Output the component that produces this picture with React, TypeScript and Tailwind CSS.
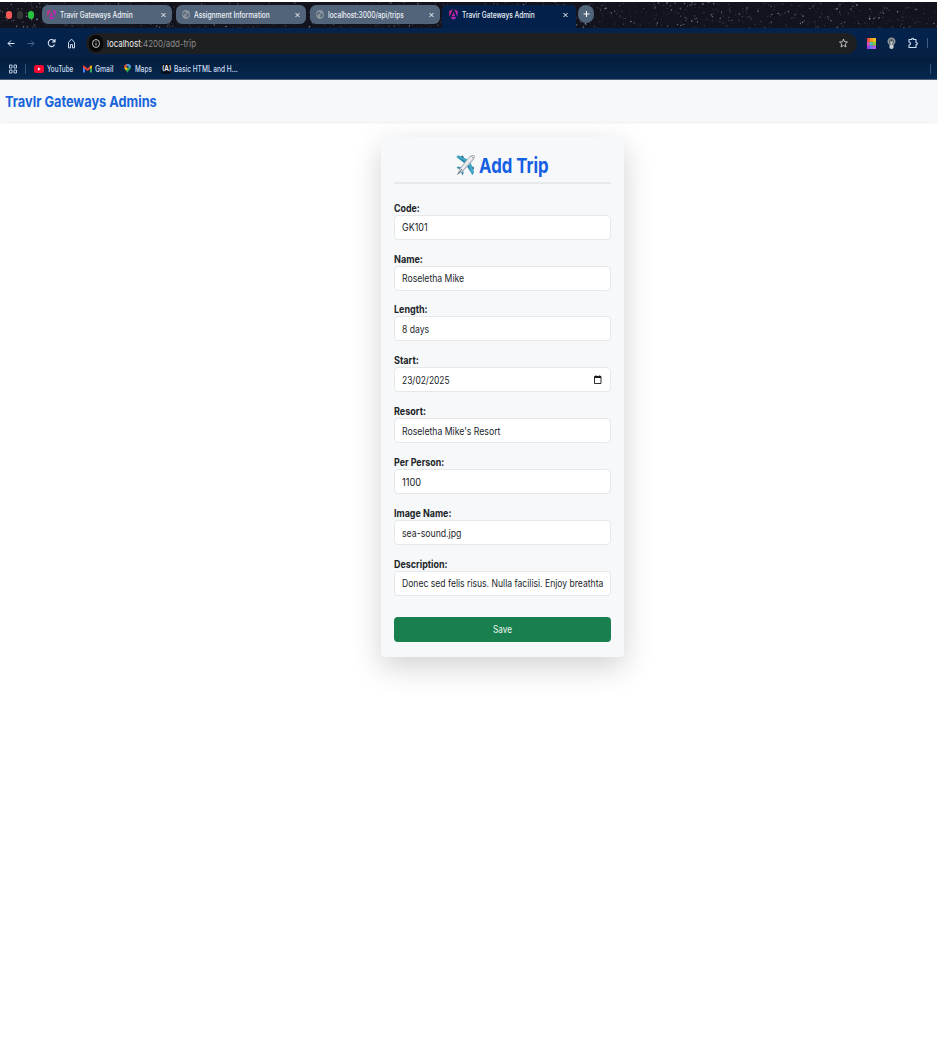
import { useLayoutEffect, useRef, useState, type ReactNode } from "react";
import clsx from "clsx";

function Fit({ w, className, children }: { w: number; className?: string; children: ReactNode }) {
  const ref = useRef<HTMLSpanElement>(null);
  const [scale, setScale] = useState(1);
  useLayoutEffect(() => {
    if (ref.current) setScale(w / ref.current.offsetWidth);
  }, [w]);
  return (
    <span className={clsx("block shrink-0 whitespace-nowrap", className)} style={{ width: w }}>
      <span ref={ref} className="inline-block origin-left" style={{ transform: `scaleX(${scale})` }}>
        {children}
      </span>
    </span>
  );
}

function makeStars() {
  let seed = 71;
  const rnd = () => {
    seed = (seed * 16807) % 2147483647;
    return seed / 2147483647;
  };
  return Array.from({ length: 1100 }, () => ({
    x: rnd() * 937,
    y: rnd() * 26,
    r: 0.35 + rnd() * 0.5,
    o: 0.1 + rnd() * rnd() * 0.65,
  }));
}
const stars = makeStars();

function Sky() {
  return (
    <svg className="absolute inset-0 h-full w-full" viewBox="0 0 937 26" preserveAspectRatio="none">
      {stars.map((s, i) => (
        <circle key={i} cx={s.x} cy={s.y} r={s.r} fill="#d9dbe8" opacity={s.o} />
      ))}
    </svg>
  );
}

function Globe() {
  return (
    <svg width="8" height="9" viewBox="0 0 16 18" className="shrink-0">
      <ellipse cx="8" cy="9" rx="8" ry="9" fill="#8d959f" />
      <path d="M2 6l4-3 3 2-2 3-3 1-1 3-2-3zM8 9l5-3 1 4-3 5-3-1 1-3z" fill="#5c6b7c" />
    </svg>
  );
}

function AngularMark() {
  return (
    <svg width="9" height="11" viewBox="0 0 16 20" className="shrink-0">
      <defs>
        <linearGradient id="ng" x1="0" y1="0" x2="1" y2="1">
          <stop offset="0" stopColor="#d4307c" />
          <stop offset="0.5" stopColor="#cf20a8" />
          <stop offset="1" stopColor="#8b32e8" />
        </linearGradient>
      </defs>
      <path d="M9.500 0.500L16 4l-.8 10.500zM6.500 .5L0 4l.8 10.500zM3.500 16.500L8 19.500l4.500-3-1-2.500h-7zM8 5.500l2.800 7H5.200z" fill="url(#ng)" />
    </svg>
  );
}

function Cross() {
  return (
    <svg width="5" height="6" viewBox="0 0 10 12" className="shrink-0">
      <path d="M1 2l8 8M9 2l-8 8" stroke="#f1f4f8" strokeWidth="2" fill="none" />
    </svg>
  );
}

function Tab({ text, w, active, mark }: { text: string; w: number; active?: boolean; mark: ReactNode }) {
  return (
    <div
      className={clsx(
        "flex h-[19px] w-[130px] shrink-0 items-center pl-[5px] pr-[6px] text-[8.300px] leading-[20px] text-[#eef2f7]",
        active ? "bg-[#03204a]" : "rounded-[6px] bg-[#52647a]",
      )}
    >
      <span className="flex w-[9px] justify-center">{mark}</span>
      <Fit w={w} className="ml-[4px] font-medium">{text}</Fit>
      <span className="flex-1" />
      <Cross />
    </div>
  );
}

function TabStrip() {
  return (
    <div className="relative h-[26px] overflow-hidden bg-[#12131d]">
      <Sky />
      <div className="relative flex pt-[3px]">
        <div className="flex h-[19px] w-[42px] items-center gap-[5px] pl-[6px]">
          <span className="h-[8px] w-[6px] rounded-full bg-[#fb5b57]" />
          <span className="h-[8px] w-[6px] rounded-full bg-[#313735]" />
          <span className="h-[8px] w-[6px] rounded-full bg-[#29c340]" />
        </div>
        <div className="flex gap-[4px]">
          <Tab text="Travir Gateways Admin" w={73} mark={<AngularMark />} />
          <Tab text="Assignment Information" w={76} mark={<Globe />} />
          <Tab text="localhost:3000/api/trips" w={76} mark={<Globe />} />
        </div>
        <div className="ml-[2px] flex h-[23px] rounded-t-[6px] bg-[#03204a] pl-[2px] pr-[2px]">
          <Tab text="Travir Gateways Admin" w={73} active mark={<AngularMark />} />
        </div>
        <div className="ml-[2px] flex h-[18px] w-[16px] items-center justify-center rounded-full bg-[#50647a]">
          <svg width="7" height="8" viewBox="0 0 14 16">
            <path d="M7 2v12M1 8h12" stroke="#fff" strokeWidth="2" />
          </svg>
        </div>
      </div>
    </div>
  );
}

function AddressRow() {
  return (
    <div className="flex h-[30px] items-center bg-gradient-to-b from-[#03234e] to-[#052043]">
      <div className="flex w-[86px] items-center pl-[7px]">
        <svg width="8" height="9" viewBox="0 0 16 18" fill="none" stroke="#dce7f5" strokeWidth="2">
          <path d="M15 9H2M8 3L2 9l6 6" />
        </svg>
        <svg className="ml-[12px]" width="8" height="9" viewBox="0 0 16 18" fill="none" stroke="#486789" strokeWidth="2">
          <path d="M1 9h13M8 3l6 6-6 6" />
        </svg>
        <svg className="ml-[12px]" width="9" height="10" viewBox="0 0 18 20" fill="none" stroke="#dce7f5" strokeWidth="2.200">
          <path d="M15 13A6.500 7 0 1 1 13.500 5l2 2M16 2v6h-6" />
        </svg>
        <svg className="ml-[11px]" width="9" height="11" viewBox="0 0 18 20" preserveAspectRatio="none" fill="none" stroke="#dce7f5" strokeWidth="1.800">
          <path d="M3 18V8l6-6 6 6v10h-4v-6H7v6z" />
        </svg>
      </div>
      <div className="flex h-[21px] w-[771px] items-center rounded-[10px] bg-[#1e1f20] pl-[3px] pr-[9px]">
        <span className="flex h-[17px] w-[14px] items-center justify-center rounded-full bg-[#080808]">
          <svg width="8" height="9" viewBox="0 0 16 18" fill="none" stroke="#e6e6e6" strokeWidth="1.700">
            <ellipse cx="8" cy="9" rx="7" ry="8" />
            <path d="M8 8v5M8 4.500v2" />
          </svg>
        </span>
        <Fit w={89} className="ml-[4px] text-[9.500px] leading-[21px] text-[#8c8d8f]">
          <span className="text-[#f0f0f0]">localhost</span>:4200/add-trip
        </Fit>
        <span className="flex-1" />
        <svg width="9" height="10" viewBox="0 0 18 20" fill="none" stroke="#d7d9dc" strokeWidth="1.700">
          <path d="M9 2l2 5.500 6 .5-4.500 4 1.500 6L9 15l-5 3 1.500-6L1 8l6-.5z" />
        </svg>
      </div>
      <div className="flex flex-1 items-center pl-[10px]">
        <svg width="9" height="11" viewBox="0 0 10 11" preserveAspectRatio="none">
          <rect width="10" height="11" fill="#e94b3c" />
          <rect x="3" width="3.500" height="4" fill="#f49a20" />
          <rect x="6.500" width="3.500" height="4" fill="#f3c323" />
          <rect y="4" width="3.300" height="3.500" fill="#d950c0" />
          <rect x="3" y="4" width="3.500" height="3.500" fill="#46c5ad" />
          <rect x="6.500" y="4" width="3.500" height="3.500" fill="#80cf32" />
          <rect y="7.500" width="3.500" height="3.500" fill="#a43be8" />
          <rect x="3" y="7.500" width="3.500" height="3.500" fill="#6379f5" />
          <rect x="6.500" y="7.500" width="3.500" height="3.500" fill="#b65cf3" />
        </svg>
        <svg className="ml-[11px]" width="9" height="12" viewBox="0 0 18 24">
          <path d="M9 1C4 1 1 4.500 1 9c0 3 2 5 4 7h8c2-2 4-4 4-7 0-4.500-3-8-8-8z" fill="#8f9498" />
          <path d="M9 4c-3 0-5 2-5 5s2 4 3 6h4c1-2 3-3 3-6s-2-5-5-5z" fill="#54616b" />
          <path d="M6 8l3 2 3-2-2 7H8z" fill="#d6d6d3" />
          <path d="M5 16h8v6l-3 2H8l-3-2z" fill="#cdd0d2" />
        </svg>
        <svg className="ml-[12px]" width="10" height="12" viewBox="0 0 20 24" fill="none" stroke="#cfe0f5" strokeWidth="2.200">
          <path d="M2 5h5.500V3.500a2 2 0 0 1 3.500 0V5h5v6h.8a2 2 0 0 1 0 4H16v6H2v-5c4 0 4-6 0-6z" strokeLinejoin="round" />
        </svg>
        <span className="ml-[9px] h-[10px] w-px bg-[#3d6189]" />
      </div>
    </div>
  );
}

function BookmarkRow() {
  return (
    <div className="flex h-[22px] items-center border-b border-[#546273] bg-gradient-to-b from-[#041d3c] to-[#06284f] pl-[9px] text-[8.300px] font-medium leading-[18px] text-[#cfdff2]">
      <svg width="8" height="10" viewBox="0 0 16 20" fill="none" stroke="#c3d4e8" strokeWidth="1.900">
        <path d="M1 2h5v6H1zM10 2h5v6h-5zM1 12h5v6H1zM10 12h5v6h-5z" />
      </svg>
      <span className="ml-[8px] h-[10px] w-px bg-[#31557e]" />
      <svg className="ml-[8px]" width="10" height="8" viewBox="0 0 18 16" preserveAspectRatio="none">
        <rect width="18" height="16" rx="4" fill="#f4082f" />
        <path d="M7 4.500l5 3.500-5 3.500z" fill="#fff" />
      </svg>
      <Fit w={26} className="ml-[3px]">YouTube</Fit>
      <svg className="ml-[10px]" width="9" height="8" viewBox="0 0 18 16">
        <path d="M0 2v13h4V6z" fill="#4285f4" />
        <path d="M18 2v13h-4V6z" fill="#34a853" />
        <path d="M0 1.500L2 1l7 6 7-6 2 .5V5l-9 7-9-7z" fill="#ea4335" />
        <path d="M14 3l2-2 2 1v3l-4 3z" fill="#fbbc04" />
      </svg>
      <Fit w={18} className="ml-[3px]">Gmail</Fit>
      <svg className="ml-[11px]" width="7" height="9" viewBox="0 0 14 18">
        <path d="M7 18C6 13 0 11 0 6c0-3 3-6 7-6s7 3 7 6c0 5-6 7-7 12z" fill="#34a853" />
        <path d="M0 6c0-3 3-6 7-6L5 6l-4 3z" fill="#ea4335" />
        <path d="M7 0c4 0 7 3 7 6L9 7 5 2z" fill="#4f96f5" />
        <path d="M1 9l4-4 3 4-4 4z" fill="#fbbc04" />
        <circle cx="7" cy="6" r="2.300" fill="#173c68" />
      </svg>
      <Fit w={17} className="ml-[4px]">Maps</Fit>
      <span className="ml-[9px] flex h-[10px] w-[10px] items-center justify-center rounded-[2px] bg-[#08101d]">
        <Fit w={9} className="text-[7px] font-semibold leading-[10px] text-white">(A)</Fit>
      </span>
      <Fit w={64} className="ml-[3px]">Basic HTML and H...</Fit>
      <span className="flex-1" />
      <span className="mr-[6px] h-[10px] w-px bg-[#31557e]" />
    </div>
  );
}

function Plane() {
  return (
    <svg width="19" height="22" viewBox="0 0 38 44" className="shrink-0">
      <path d="M1 6l4-3 20 9-5 9z" fill="#2a8aae" />
      <path d="M33 42l3-5-8-23-8 8z" fill="#2a8aae" />
      <path d="M1 5l4-2 20 9-3 3z" fill="#43a9c9" />
      <path d="M36 38l-8-24-3 5 6 21z" fill="#43a9c9" />
      <path d="M10 4l4-1 2 5-4-1zM34 24l2 4-1 4-3-5z" fill="#286f8c" />
      <path d="M1 27l4-2 10 3-4 6z" fill="#338fad" />
      <path d="M13 43l2-4-1-12-5 7z" fill="#338fad" />
      <path d="M3 41l4-12L26 6c4-4 9-5 11-3s0 7-4 11L13 36z" fill="#a9b0b7" />
      <path d="M6 34L26 8c3-3 7-4 9-4s0 5-4 9L11 35z" fill="#e9ebee" />
      <path d="M3 41l9-11" stroke="#5a6c78" strokeWidth="2" />
      <path d="M31 5l4 4" stroke="#697783" strokeWidth="1.500" />
    </svg>
  );
}

const fields = [
  { label: "Code:", lw: 26, value: "GK101", vw: 25.5 },
  { label: "Name:", lw: 28.5, value: "Roseletha Mike", vw: 62 },
  { label: "Length:", lw: 33.5, value: "8 days", vw: 27 },
  { label: "Start:", lw: 25, value: "23/02/2025", vw: 48, date: true },
  { label: "Resort:", lw: 32, value: "Roseletha Mike's Resort", vw: 98 },
  { label: "Per Person:", lw: 50.5, value: "1100", vw: 19 },
  { label: "Image Name:", lw: 57, value: "sea-sound.jpg", vw: 59 },
  { label: "Description:", lw: 53.5, value: "Donec sed felis risus. Nulla facilisi. Enjoy breathta", vw: 201.5 },
];

function TripForm() {
  return (
    <main className="ml-[381px] mt-[15px] h-[520px] w-[243px] rounded-[4px] bg-[#f6f8fa] px-[13.400px] pt-[14px] shadow-[0_10px_30px_rgba(0,0,0,0.18)]">
      <h2 className="flex h-[33px] items-start justify-center border-b-2 border-[#e7eaed]">
        <span className="mt-[3px]">
          <Plane />
        </span>
        <Fit w={69.5} className="ml-[4px] text-[20.500px] font-bold leading-[30px] text-[#155fe3]">Add Trip</Fit>
      </h2>
      <div className="mt-[15.700px] flex flex-col gap-[10.900px]">
        {fields.map((f) => (
          <div key={f.label}>
            <Fit w={f.lw} className="h-[15px] text-[10.200px] font-bold leading-[17px] text-[#212529]">{f.label}</Fit>
            <div className="flex h-[25px] items-center justify-between rounded-[4px] border border-[#e4e8eb] bg-white pl-[6.500px] pr-[7px]">
              <Fit w={f.vw} className="text-[10.200px] leading-[24px] text-[#212529]">{f.value}</Fit>
              {f.date && (
                <svg width="10" height="10" viewBox="0 0 20 20" fill="none" stroke="#16181a">
                  <path d="M3 3h13v14H3z" strokeWidth="1.800" />
                  <path d="M3 4.500h13M6 1v3M13 1v3" strokeWidth="3" />
                </svg>
              )}
            </div>
          </div>
        ))}
      </div>
      <button className="mt-[20.700px] flex h-[25px] w-full items-center justify-center rounded-[4px] bg-[#1a7f4e] text-[10.200px] leading-[24px] text-[#edf8f2]">
        <Fit w={19.5}>Save</Fit>
      </button>
    </main>
  );
}

export default function App() {
  return (
    <div className="h-[1047px] w-[941px] overflow-hidden bg-white pr-[4px] pt-[2px] font-['Inter','Liberation_Sans',sans-serif]">
      <TabStrip />
      <AddressRow />
      <BookmarkRow />
      <header className="h-[42px] bg-[#f6f8fa] pl-[5px] pt-[11px] shadow-[0_1px_2px_rgba(0,0,0,0.07)]">
        <Fit w={151.5} className="text-[15px] font-bold leading-[22px] text-[#1964db]">Travlr Gateways Admins</Fit>
      </header>
      <TripForm />
    </div>
  );
}
